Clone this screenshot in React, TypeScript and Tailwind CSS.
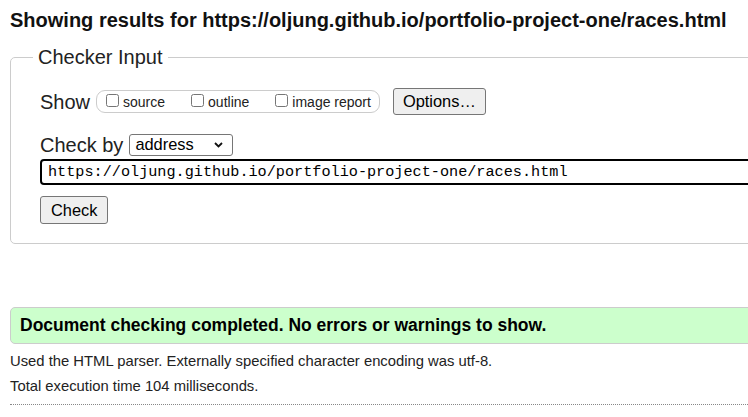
const sans = "font-['Liberation_Sans',Arial,sans-serif]";

function Option({ label }: { label: string }) {
  return (
    <label className="flex items-baseline text-[14px] leading-[16px]">
      <input type="checkbox" className="m-0 mr-[4px] h-[13px] w-[13px]" />
      {label}
    </label>
  );
}

export default function App() {
  return (
    <div className={`h-[417px] w-[748px] overflow-hidden bg-white text-[#222] ${sans}`}>
      <div className="w-[820px] pl-[10px]">
        <h2 className="pt-[8px] text-[20px] font-bold leading-[24px] text-[#111]">
          Showing results for https://oljung.github.io/portfolio-project-one/races.html
        </h2>

        <fieldset className="mt-[13px] rounded-[5px] border border-[#ccc] pb-[19px] pl-[22px]">
          <legend className="px-[5px] text-[20px] leading-[24px]">Checker Input</legend>
          <div className="pl-[7px] pt-[19px]">
            <div className="flex h-[27px] items-center">
              <span className="text-[20px] leading-[24px]">Show</span>
              <div className="ml-[6px] flex h-[23px] items-center gap-[26px] rounded-[9px] border border-[#ccc] pl-[9px] pr-[8px]">
                <Option label="source" />
                <Option label="outline" />
                <Option label="image report" />
              </div>
              <button className="ml-[13px] h-[27px] rounded-[3px] border border-[#767676] bg-[#efefef] px-[9px] text-[16.4px] leading-[19px] text-black">
                Options…
              </button>
            </div>

            <div className="mt-[18px] flex h-[24px] items-center">
              <span className="text-[20px] leading-[24px]">Check by</span>
              <div className="relative ml-[6px]">
                <select className="h-[22px] w-[104px] appearance-none rounded-[3px] border border-[#767676] bg-white pl-[5px] text-[16.4px] leading-[19px] text-black">
                  <option>address</option>
                </select>
                <svg
                  className="pointer-events-none absolute right-[10px] top-[9px]"
                  width="9"
                  height="6"
                  viewBox="0 0 9 6"
                  fill="none"
                  stroke="#111"
                  strokeWidth="1.8"
                >
                  <path d="M1 1l3.5 3.5L8 1" />
                </svg>
              </div>
            </div>

            <input
              type="text"
              defaultValue="https://oljung.github.io/portfolio-project-one/races.html"
              className="mt-[2px] block h-[26px] w-[760px] rounded-[4px] border-2 border-black px-[6px] font-['Liberation_Mono','DejaVu_Sans_Mono',monospace] text-[15.2px] text-black outline-none"
            />

            <button className="mt-[11px] block h-[28px] rounded-[3px] border border-[#767676] bg-[#efefef] px-[10px] text-[16.4px] leading-[19px] text-black">
              Check
            </button>
          </div>
        </fieldset>

        <div className="mt-[63px] flex h-[37px] items-center rounded-[5px] border border-[#ccc] bg-[#ccffcc] pl-[9px] text-[17.5px] font-bold text-black">
          Document checking completed. No errors or warnings to show.
        </div>

        <p className="mt-[9px] text-[14.8px] leading-[17px]">
          Used the HTML parser. Externally specified character encoding was utf-8.
        </p>
        <p className="mt-[8px] text-[14.8px] leading-[17px]">Total execution time 104 milliseconds.</p>

        <hr className="mt-[9px] border-t border-dotted border-[#888]" />
      </div>
    </div>
  );
}
